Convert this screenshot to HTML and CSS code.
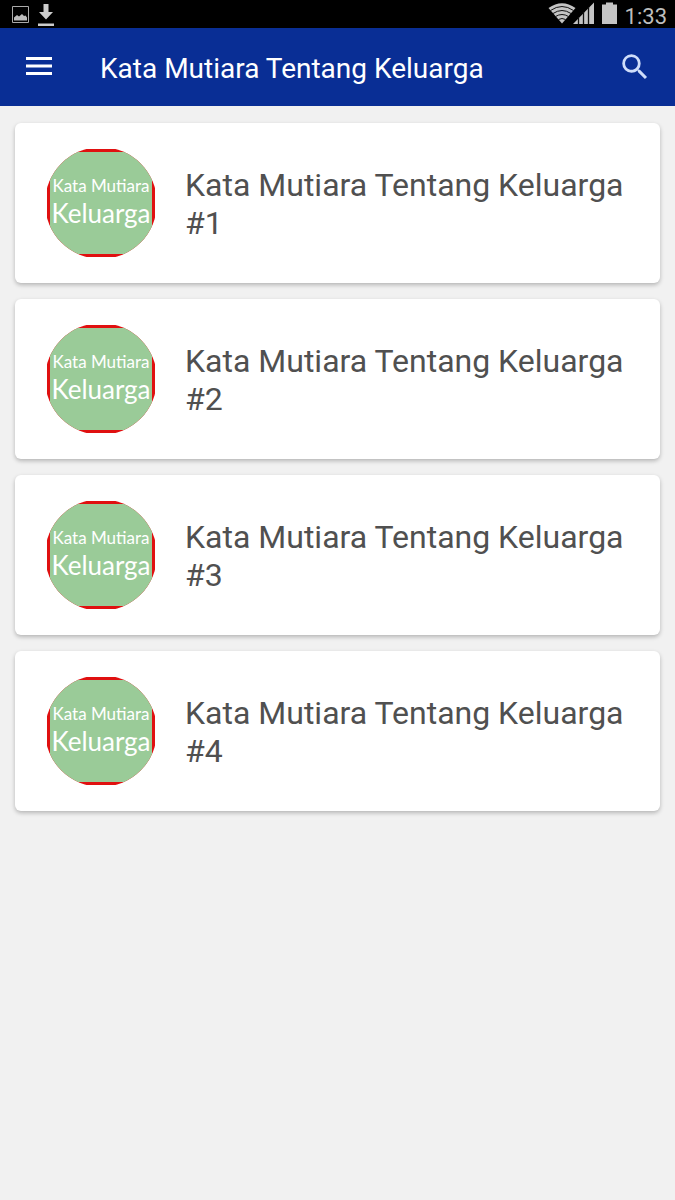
FILE: index.html
```html
<!DOCTYPE html>
<html lang="id">
<head>
<meta charset="utf-8">
<meta name="viewport" content="width=device-width, initial-scale=1">
<title>Kata Mutiara Tentang Keluarga</title>
<link rel="stylesheet" href="styles.css">
</head>
<body>
<div class="status">
  <svg class="status-icon" width="54" height="28" viewBox="0 0 54 28" aria-hidden="true">
    <path d="M12.500 6.500h16v16h-16z" fill="none" stroke="#aaa"/>
    <path d="M14 20.500v-3l3-2.500 2 1.500 3-2.500 2 2 1.500-.5 1.500 2v3z" fill="#bbb"/>
    <path d="M43.500 4h5v8h4.500L46 19.500 39 12h4.500zM38 23.500h16v2.500H38z" fill="#ccc"/>
  </svg>
  <div class="status-right">
    <svg class="status-icon" width="54" height="28" viewBox="0 0 54 28" aria-hidden="true">
      <path d="M.5 8Q14-1.500 27.500 8L14 23.500z" fill="#c4c4c4"/>
      <path d="M2.500 10.500Q14 2.500 25.500 10.500M5 13.500Q14 7.500 23 13.500M7.500 16.500Q14 12.500 20.500 16.500M10.500 19.500Q14 17.500 17.500 19.500" fill="none" stroke="#111"/>
      <path d="M25 24 46 2.500V24z" fill="#c4c4c4"/>
      <path d="M30.500 17v7M35.500 12v12M40.500 7v17" stroke="#111" stroke-width="1.300"/>
    </svg>
    <svg class="status-icon" width="15" height="28" viewBox="0 0 15 28" aria-hidden="true">
      <path d="M0 4.500h4V2.500h7v2h4v19.500H0z" fill="#c4c4c4"/>
    </svg>
    <time class="clock">1:33</time>
  </div>
</div>
<header class="appbar">
  <button class="icon-button" type="button" aria-label="Menu">
    <svg width="26" height="20" viewBox="0 0 26 20"><path d="M0 0h26v3H0zM0 7.500h26v3H0zM0 15h26v3H0z" fill="#fff"/></svg>
  </button>
  <h1 class="title">Kata Mutiara Tentang Keluarga</h1>
  <button class="icon-button" type="button" aria-label="Cari">
    <svg width="34" height="34" viewBox="0 0 24 24"><path fill="#cfddfa" d="M15.500 14h-.79l-.28-.27A6.471 6.471 0 0 0 16 9.500 6.500 6.500 0 1 0 9.500 16c1.610 0 3.090-.59 4.230-1.570l.27.280v.79l5 4.990L20.490 19l-4.990-5zm-6 0C7.010 14 5 11.990 5 9.500S7.010 5 9.500 5 14 7.010 14 9.500 11.990 14 9.500 14z"/></svg>
  </button>
</header>
<main class="list">
  <a class="card" href="#1">
    <span class="avatar"><span class="avatar-face"><span class="avatar-small">Kata Mutiara</span><span class="avatar-large">Keluarga</span></span></span>
    <span class="label">Kata Mutiara Tentang Keluarga #1</span>
  </a>
  <a class="card" href="#2">
    <span class="avatar"><span class="avatar-face"><span class="avatar-small">Kata Mutiara</span><span class="avatar-large">Keluarga</span></span></span>
    <span class="label">Kata Mutiara Tentang Keluarga #2</span>
  </a>
  <a class="card" href="#3">
    <span class="avatar"><span class="avatar-face"><span class="avatar-small">Kata Mutiara</span><span class="avatar-large">Keluarga</span></span></span>
    <span class="label">Kata Mutiara Tentang Keluarga #3</span>
  </a>
  <a class="card" href="#4">
    <span class="avatar"><span class="avatar-face"><span class="avatar-small">Kata Mutiara</span><span class="avatar-large">Keluarga</span></span></span>
    <span class="label">Kata Mutiara Tentang Keluarga #4</span>
  </a>
</main>
</body>
</html>
```
FILE: styles.css
```css
* {
  box-sizing: border-box;
}

body {
  margin: 0;
  min-height: 100vh;
  background: #f1f1f1;
  font-family: Roboto, "Liberation Sans", sans-serif;
}

.status {
  display: flex;
  justify-content: space-between;
  height: 28px;
  padding-right: 8px;
  background: #000;
}

.status-icon {
  display: block;
}

.status-right {
  display: flex;
}

.clock {
  margin-left: 8px;
  color: #bebebe;
  font-size: 22px;
  line-height: 33px;
}

.appbar {
  display: flex;
  align-items: center;
  height: 78px;
  padding: 0 23px 0 26px;
  background: #092e95;
}

.icon-button {
  display: flex;
  padding: 0;
  border: 0;
  background: none;
  cursor: pointer;
}

.title {
  flex: 1;
  margin: 0 0 0 48px;
  padding-top: 4px;
  color: #fff;
  font-size: 28px;
  font-weight: 400;
  line-height: 36px;
}

.list {
  display: flex;
  flex-direction: column;
  gap: 16px;
  padding: 17px 15px;
}

.card {
  display: flex;
  align-items: center;
  gap: 30px;
  min-height: 160px;
  padding: 24px 32px;
  border-radius: 6px;
  background: #fff;
  box-shadow: 0 2px 4px rgba(0, 0, 0, 0.25);
  color: #505050;
  text-decoration: none;
}

.avatar {
  display: flex;
  flex: none;
  width: 108px;
  height: 108px;
  padding: 3px;
  background: #e01010;
  clip-path: circle(56px);
}

.avatar-face {
  display: flex;
  flex: 1;
  flex-direction: column;
  align-items: center;
  justify-content: center;
  padding-bottom: 6px;
  background: #9acb98;
  color: #fff;
  font-family: Lato, sans-serif;
  white-space: nowrap;
}

.avatar-small {
  font-size: 17px;
  line-height: 26px;
}

.avatar-large {
  font-size: 26px;
  line-height: 28px;
}

.label {
  padding-top: 2px;
  font-size: 32px;
  line-height: 38px;
}
```
